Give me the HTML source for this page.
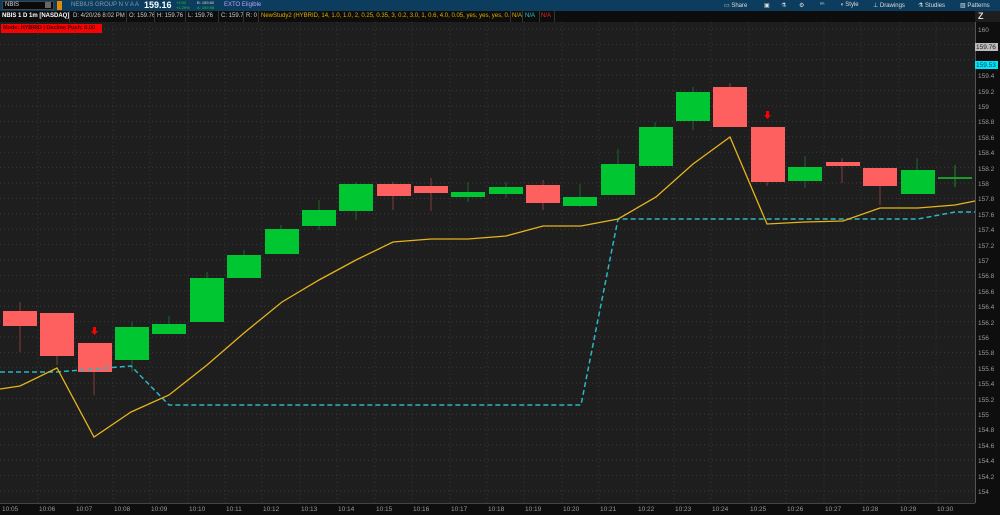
<!DOCTYPE html>
<html><head><meta charset="utf-8"><style>
*{margin:0;padding:0;box-sizing:border-box}
body{width:1000px;height:515px;background:#1e1e1e;overflow:hidden;font-family:"Liberation Sans",sans-serif;position:relative}
.top{position:absolute;left:0;top:0;width:1000px;height:11px;background:#0c3d5e;font-size:6px;color:#aac;}
.top span{position:absolute;top:2px;white-space:nowrap}
.row2{position:absolute;left:0;top:11px;width:975px;height:11px;background:#0d0d0d;font-size:6px;}
.row2 span{position:absolute;top:0;height:11px;white-space:nowrap;overflow:hidden;color:#ccc;padding:0 2px;border-right:1px solid #333;line-height:11px}
</style></head><body>
<div class="top">
<span style="left:2px;top:1px;width:52px;height:9px;background:#0a0a0a;border:1px solid #444;color:#ddd;font-size:6px;padding-left:2px;line-height:7px">NBIS</span>
<span style="left:45px;top:2px;width:6px;height:6px;background:#666"></span>
<span style="left:57px;top:1px;width:5px;height:9px;background:#e08a00"></span>
<span style="left:71px;color:#8899aa;font-size:6px">NEBIUS GROUP N V A A</span>
<span style="left:144px;top:0;color:#fff;font-size:9px;font-weight:bold;line-height:11px">159.16</span>
<span style="left:176px;top:1px;color:#2c2;font-size:4px;line-height:4.5px">+2.02<br>+1.29%</span>
<span style="left:197px;top:1px;color:#ddd;font-size:4px;line-height:4.5px">B: 159.60<br><span style="color:#2c2;position:static">A: 159.98</span></span>
<span style="left:224px;color:#b9a0ff;font-size:6px">EXTO Eligible</span>
<span style="left:724px;color:#ddd">▭ Share</span>
<span style="left:764px;color:#ddd">▣</span>
<span style="left:781px;color:#ddd">⚗</span>
<span style="left:799px;color:#ddd">⚙</span>
<span style="left:820px;color:#ddd">ⁿⁿ</span>
<span style="left:840px;color:#ddd">◖ Style</span>
<span style="left:873px;color:#ddd">⊥ Drawings</span>
<span style="left:918px;color:#ddd">⚗ Studies</span>
<span style="left:960px;color:#ddd">▧ Patterns</span>
</div>
<div class="row2">
<span style="left:0;width:70px;color:#fff;font-weight:bold">NBIS 1 D 1m [NASDAQ]</span>
<span style="left:71px;width:56px">D: 4/20/26 8:02 PM</span>
<span style="left:127px;width:28px">O: 159.76</span>
<span style="left:155px;width:31px">H: 159.76</span>
<span style="left:186px;width:33px">L: 159.76</span>
<span style="left:219px;width:25px">C: 159.76</span>
<span style="left:244px;width:15px">R: 0</span>
<span style="left:259px;width:252px;color:#e0b000">NewStudy2 (HYBRID, 14, 1.0, 1.0, 2, 0.25, 0.35, 3, 0.2, 3.0, 1, 0.6, 4.0, 0.05, yes, yes, yes, 0.15)</span>
<span style="left:511px;width:12px;color:#e0b000;padding:0 1px">N/A</span>
<span style="left:523px;width:17px;color:#2cc">N/A</span>
<span style="left:540px;width:15px;color:#e22;padding:0 1px">N/A</span>
</div>
<div style="position:absolute;left:1px;top:24px;width:101px;height:9px;background:#f00;color:#300;font-size:5.5px;font-weight:bold;line-height:9px;padding-left:2px;white-space:nowrap;overflow:hidden">Mode: HYBRID | Decline Push: 0.00</div>
<svg style="position:absolute;left:0;top:0" width="1000" height="515">
<g stroke="#3a3a3a" stroke-width="1" stroke-dasharray="1,3">
<line x1="0" y1="29" x2="975" y2="29"/><line x1="0" y1="44.4" x2="975" y2="44.4"/><line x1="0" y1="59.8" x2="975" y2="59.8"/><line x1="0" y1="75.2" x2="975" y2="75.2"/><line x1="0" y1="90.6" x2="975" y2="90.6"/><line x1="0" y1="106" x2="975" y2="106"/><line x1="0" y1="121.4" x2="975" y2="121.4"/><line x1="0" y1="136.8" x2="975" y2="136.8"/><line x1="0" y1="152.2" x2="975" y2="152.2"/><line x1="0" y1="167.6" x2="975" y2="167.6"/><line x1="0" y1="183" x2="975" y2="183"/><line x1="0" y1="198.4" x2="975" y2="198.4"/><line x1="0" y1="213.8" x2="975" y2="213.8"/><line x1="0" y1="229.2" x2="975" y2="229.2"/><line x1="0" y1="244.6" x2="975" y2="244.6"/><line x1="0" y1="260" x2="975" y2="260"/><line x1="0" y1="275.4" x2="975" y2="275.4"/><line x1="0" y1="290.8" x2="975" y2="290.8"/><line x1="0" y1="306.2" x2="975" y2="306.2"/><line x1="0" y1="321.6" x2="975" y2="321.6"/><line x1="0" y1="337" x2="975" y2="337"/><line x1="0" y1="352.4" x2="975" y2="352.4"/><line x1="0" y1="367.8" x2="975" y2="367.8"/><line x1="0" y1="383.2" x2="975" y2="383.2"/><line x1="0" y1="398.6" x2="975" y2="398.6"/><line x1="0" y1="414" x2="975" y2="414"/><line x1="0" y1="429.4" x2="975" y2="429.4"/><line x1="0" y1="444.8" x2="975" y2="444.8"/><line x1="0" y1="460.2" x2="975" y2="460.2"/><line x1="0" y1="475.6" x2="975" y2="475.6"/><line x1="0" y1="491" x2="975" y2="491"/>
</g>
<g stroke="#353535" stroke-dasharray="1,3">
<line x1="38" y1="22" x2="38" y2="503"/><line x1="75" y1="22" x2="75" y2="503"/><line x1="113" y1="22" x2="113" y2="503"/><line x1="150" y1="22" x2="150" y2="503"/><line x1="188" y1="22" x2="188" y2="503"/><line x1="225" y1="22" x2="225" y2="503"/><line x1="262" y1="22" x2="262" y2="503"/><line x1="300" y1="22" x2="300" y2="503"/><line x1="337" y1="22" x2="337" y2="503"/><line x1="375" y1="22" x2="375" y2="503"/><line x1="412" y1="22" x2="412" y2="503"/><line x1="450" y1="22" x2="450" y2="503"/><line x1="487" y1="22" x2="487" y2="503"/><line x1="524" y1="22" x2="524" y2="503"/><line x1="562" y1="22" x2="562" y2="503"/><line x1="599" y1="22" x2="599" y2="503"/><line x1="637" y1="22" x2="637" y2="503"/><line x1="674" y1="22" x2="674" y2="503"/><line x1="711" y1="22" x2="711" y2="503"/><line x1="749" y1="22" x2="749" y2="503"/><line x1="786" y1="22" x2="786" y2="503"/><line x1="824" y1="22" x2="824" y2="503"/><line x1="861" y1="22" x2="861" y2="503"/><line x1="899" y1="22" x2="899" y2="503"/><line x1="936" y1="22" x2="936" y2="503"/>
</g>
<g stroke-width="1">
<line x1="20" y1="302" x2="20" y2="352" stroke="#8a3a3a"/>
<line x1="57" y1="313" x2="57" y2="365" stroke="#8a3a3a"/>
<line x1="94" y1="343" x2="94" y2="395" stroke="#8a3a3a"/>
<line x1="132" y1="322" x2="132" y2="372" stroke="#1a6a2a"/>
<line x1="169" y1="316" x2="169" y2="334" stroke="#1a6a2a"/>
<line x1="207" y1="272" x2="207" y2="322" stroke="#1a6a2a"/>
<line x1="244" y1="250" x2="244" y2="278" stroke="#1a6a2a"/>
<line x1="281" y1="225" x2="281" y2="254" stroke="#1a6a2a"/>
<line x1="319" y1="200" x2="319" y2="230" stroke="#1a6a2a"/>
<line x1="356" y1="182" x2="356" y2="220" stroke="#1a6a2a"/>
<line x1="393" y1="182" x2="393" y2="210" stroke="#8a3a3a"/>
<line x1="431" y1="178" x2="431" y2="211" stroke="#8a3a3a"/>
<line x1="468" y1="182" x2="468" y2="202" stroke="#1a6a2a"/>
<line x1="506" y1="182" x2="506" y2="198" stroke="#1a6a2a"/>
<line x1="543" y1="180" x2="543" y2="210" stroke="#8a3a3a"/>
<line x1="580" y1="184" x2="580" y2="207" stroke="#1a6a2a"/>
<line x1="618" y1="149" x2="618" y2="195" stroke="#1a6a2a"/>
<line x1="655" y1="122" x2="655" y2="166" stroke="#1a6a2a"/>
<line x1="693" y1="87" x2="693" y2="130" stroke="#1a6a2a"/>
<line x1="730" y1="83" x2="730" y2="127" stroke="#8a3a3a"/>
<line x1="767" y1="127" x2="767" y2="186" stroke="#8a3a3a"/>
<line x1="805" y1="156" x2="805" y2="188" stroke="#1a6a2a"/>
<line x1="842" y1="158" x2="842" y2="183" stroke="#8a3a3a"/>
<line x1="880" y1="168" x2="880" y2="205" stroke="#8a3a3a"/>
<line x1="917" y1="158" x2="917" y2="194" stroke="#1a6a2a"/>
<line x1="955" y1="165" x2="955" y2="187" stroke="#1a8a2a"/>
</g>
<g>
<rect x="3" y="311" width="34" height="15" fill="#fe5f5f"/>
<rect x="40" y="313" width="34" height="43" fill="#fe5f5f"/>
<rect x="78" y="343" width="34" height="29" fill="#fe5f5f"/>
<rect x="115" y="327" width="34" height="33" fill="#00c632"/>
<rect x="152" y="324" width="34" height="10" fill="#00c632"/>
<rect x="190" y="278" width="34" height="44" fill="#00c632"/>
<rect x="227" y="255" width="34" height="23" fill="#00c632"/>
<rect x="265" y="229" width="34" height="25" fill="#00c632"/>
<rect x="302" y="210" width="34" height="16" fill="#00c632"/>
<rect x="339" y="184" width="34" height="27" fill="#00c632"/>
<rect x="377" y="184" width="34" height="12" fill="#fe5f5f"/>
<rect x="414" y="186" width="34" height="7" fill="#fe5f5f"/>
<rect x="451" y="192" width="34" height="5" fill="#00c632"/>
<rect x="489" y="187" width="34" height="7" fill="#00c632"/>
<rect x="526" y="185" width="34" height="18" fill="#fe5f5f"/>
<rect x="563" y="197" width="34" height="9" fill="#00c632"/>
<rect x="601" y="164" width="34" height="31" fill="#00c632"/>
<rect x="639" y="127" width="34" height="39" fill="#00c632"/>
<rect x="676" y="92" width="34" height="29" fill="#00c632"/>
<rect x="713" y="87" width="34" height="40" fill="#fe5f5f"/>
<rect x="751" y="127" width="34" height="55" fill="#fe5f5f"/>
<rect x="788" y="167" width="34" height="14" fill="#00c632"/>
<rect x="826" y="162" width="34" height="4" fill="#fe5f5f"/>
<rect x="863" y="168" width="34" height="18" fill="#fe5f5f"/>
<rect x="901" y="170" width="34" height="24" fill="#00c632"/>
<rect x="938" y="177" width="34" height="2" fill="#1a9a2a"/>
</g>
<g fill="#f00">
<path d="M93 327h3v4h2l-3.5 4-3.5-4h2z"/>
<path d="M766 111h3v4h2l-3.5 4-3.5-4h2z"/>
</g>
<polyline fill="none" stroke="#2ab7c4" stroke-width="1.5" stroke-dasharray="5,3" points="0,372 57,372 131,366 169,405 581,405 618,219 918,219 955,212 975,212"/>
<polyline fill="none" stroke="#e6b41c" stroke-width="1.3" points="0,389 20,386 57,368 94,437 131,412 169,395 207,365 244,333 282,302 319,280 356,260 393,242 431,239 468,239 506,236 543,226 581,226 618,219 656,197 693,164 730,137 767,224 805,222 843,221 880,208 918,208 955,205 975,201"/>
<rect x="975" y="22" width="25" height="493" fill="#0e0e0e"/>
<line x1="975.5" y1="22" x2="975.5" y2="503" stroke="#555"/>
<rect x="0" y="503" width="975" height="12" fill="#0e0e0e"/>
<line x1="0" y1="503.5" x2="975" y2="503.5" stroke="#444"/>
<rect x="975" y="43" width="23" height="8" fill="#bbb"/>
<rect x="975" y="61" width="23" height="8" fill="#00e5ff"/>
<g font-size="6.5" fill="#999" font-family="Liberation Sans">
<text x="978" y="32">160</text><text x="976" y="49" fill="#222">159.76</text><text x="976" y="67" fill="#044">159.53</text>
<text x="978" y="78">159.4</text><text x="978" y="94">159.2</text><text x="978" y="109">159</text><text x="978" y="124">158.8</text><text x="978" y="140">158.6</text><text x="978" y="155">158.4</text><text x="978" y="171">158.2</text><text x="978" y="186">158</text><text x="978" y="201">157.8</text><text x="978" y="217">157.6</text><text x="978" y="232">157.4</text><text x="978" y="248">157.2</text><text x="978" y="263">157</text><text x="978" y="278">156.8</text><text x="978" y="294">156.6</text><text x="978" y="309">156.4</text><text x="978" y="325">156.2</text><text x="978" y="340">156</text><text x="978" y="355">155.8</text><text x="978" y="371">155.6</text><text x="978" y="386">155.4</text><text x="978" y="402">155.2</text><text x="978" y="417">155</text><text x="978" y="432">154.8</text><text x="978" y="448">154.6</text><text x="978" y="463">154.4</text><text x="978" y="479">154.2</text><text x="978" y="494">154</text>
</g>
<text x="978" y="19" font-size="9" fill="#ddd" font-weight="bold">Z</text>
<g font-size="6.5" fill="#999" font-family="Liberation Sans">
<text x="2" y="511">10:05</text><text x="39" y="511">10:06</text><text x="76" y="511">10:07</text><text x="114" y="511">10:08</text><text x="151" y="511">10:09</text><text x="189" y="511">10:10</text><text x="226" y="511">10:11</text><text x="263" y="511">10:12</text><text x="301" y="511">10:13</text><text x="338" y="511">10:14</text><text x="376" y="511">10:15</text><text x="413" y="511">10:16</text><text x="451" y="511">10:17</text><text x="488" y="511">10:18</text><text x="525" y="511">10:19</text><text x="563" y="511">10:20</text><text x="600" y="511">10:21</text><text x="638" y="511">10:22</text><text x="675" y="511">10:23</text><text x="712" y="511">10:24</text><text x="750" y="511">10:25</text><text x="787" y="511">10:26</text><text x="825" y="511">10:27</text><text x="862" y="511">10:28</text><text x="900" y="511">10:29</text><text x="937" y="511">10:30</text>
</g>
</svg>
</body></html>
